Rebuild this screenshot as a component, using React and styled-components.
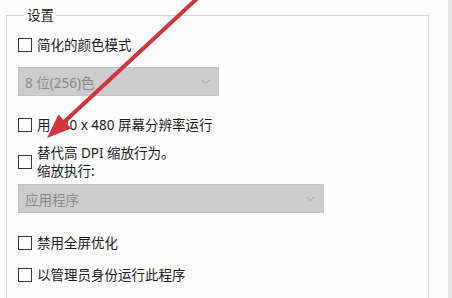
import React from "react";
import styled, { createGlobalStyle } from "styled-components";

const GlobalStyle = createGlobalStyle`
  html, body {
    margin: 0;
    padding: 0;
    background: #fdfdfd;
  }
  body {
    font-family: "Noto Sans", "Noto Sans CJK SC", sans-serif;
    font-size: 13.5px;
    color: #1b1b1b;
  }
`;

const Chevron = () => (
  <svg width="9" height="6" viewBox="0 0 9 6">
    <path d="M0.5 0.8 L4.5 4.8 L8.5 0.8" fill="none" stroke="#a3a3a3" strokeWidth="1" />
  </svg>
);

const Arrow = () => (
  <A.Overlay width="452" height="298" viewBox="0 0 452 298">
    <line x1="203" y1="-7" x2="63" y2="123" stroke="#d2353b" strokeWidth="4" strokeLinecap="round" />
    <polygon points="47,138 71,128.5 58.5,114.5" fill="#d2353b" />
  </A.Overlay>
);

function Option({ label, lines }) {
  return (
    <S.Row>
      <S.Box />
      <S.Label>{lines ? lines.map((l) => <div key={l}>{l}</div>) : label}</S.Label>
    </S.Row>
  );
}

function Select({ value, width, gap }) {
  return (
    <S.Select $width={width} $gap={gap}>
      <span>{value}</span>
      <Chevron />
    </S.Select>
  );
}

export default function App() {
  return (
    <>
      <GlobalStyle />
      <S.Page>
        <S.Panel>
          <S.Group>
            <S.Legend>设置</S.Legend>
            <S.First>
              <Option label="简化的颜色模式" />
            </S.First>
            <Select value="8 位(256)色" width={201} gap={12} />
            <S.Spaced $gap={19}>
              <Option label="用 640 x 480 屏幕分辨率运行" />
            </S.Spaced>
            <S.Spaced $gap={9}>
              <Option lines={["替代高 DPI 缩放行为。", "缩放执行:"]} />
            </S.Spaced>
            <Select value="应用程序" width={306} gap={4} />
            <S.Spaced $gap={20}>
              <Option label="禁用全屏优化" />
            </S.Spaced>
            <S.Spaced $gap={12}>
              <Option label="以管理员身份运行此程序" />
            </S.Spaced>
          </S.Group>
        </S.Panel>
        <S.Edge />
        <Arrow />
      </S.Page>
    </>
  );
}

const S = {
  Page: styled.div`
    position: relative;
    display: flex;
    width: 452px;
    height: 298px;
    overflow: hidden;
  `,
  Panel: styled.div`
    flex: 1;
    padding: 7px 0 0 6px;
  `,
  Edge: styled.div`
    width: 4px;
    background: #e6e6e6;
  `,
  Group: styled.fieldset`
    margin: 0;
    width: 423px;
    height: 320px;
    box-sizing: border-box;
    padding: 0 0 0 11px;
    border: 1px solid #dadada;
    border-bottom: none;
    min-inline-size: auto;
  `,
  Legend: styled.legend`
    margin-left: 7px;
    padding: 0 2px;
    font-size: 13.5px;
    line-height: 17px;
  `,
  First: styled.div`
    margin-top: 11px;
  `,
  Spaced: styled.div`
    margin-top: ${(p) => p.$gap}px;
  `,
  Row: styled.div`
    display: flex;
    align-items: center;
    gap: 5px;
    min-height: 20px;
    line-height: 18px;
  `,
  Box: styled.span`
    width: 14px;
    height: 14px;
    box-sizing: border-box;
    border: 1px solid #333;
    background: #fff;
    flex-shrink: 0;
  `,
  Label: styled.div`
    white-space: nowrap;
  `,
  Select: styled.div`
    display: flex;
    align-items: center;
    justify-content: space-between;
    box-sizing: border-box;
    width: ${(p) => p.$width}px;
    height: 29px;
    margin-top: ${(p) => p.$gap}px;
    padding: 0 8px 0 6px;
    background: #cccccc;
    border: 1px solid #c4c4c4;
    color: #8c8c8c;
  `,
};

const A = {
  Overlay: styled.svg`
    position: absolute;
    top: 0;
    left: 0;
    pointer-events: none;
  `,
};
